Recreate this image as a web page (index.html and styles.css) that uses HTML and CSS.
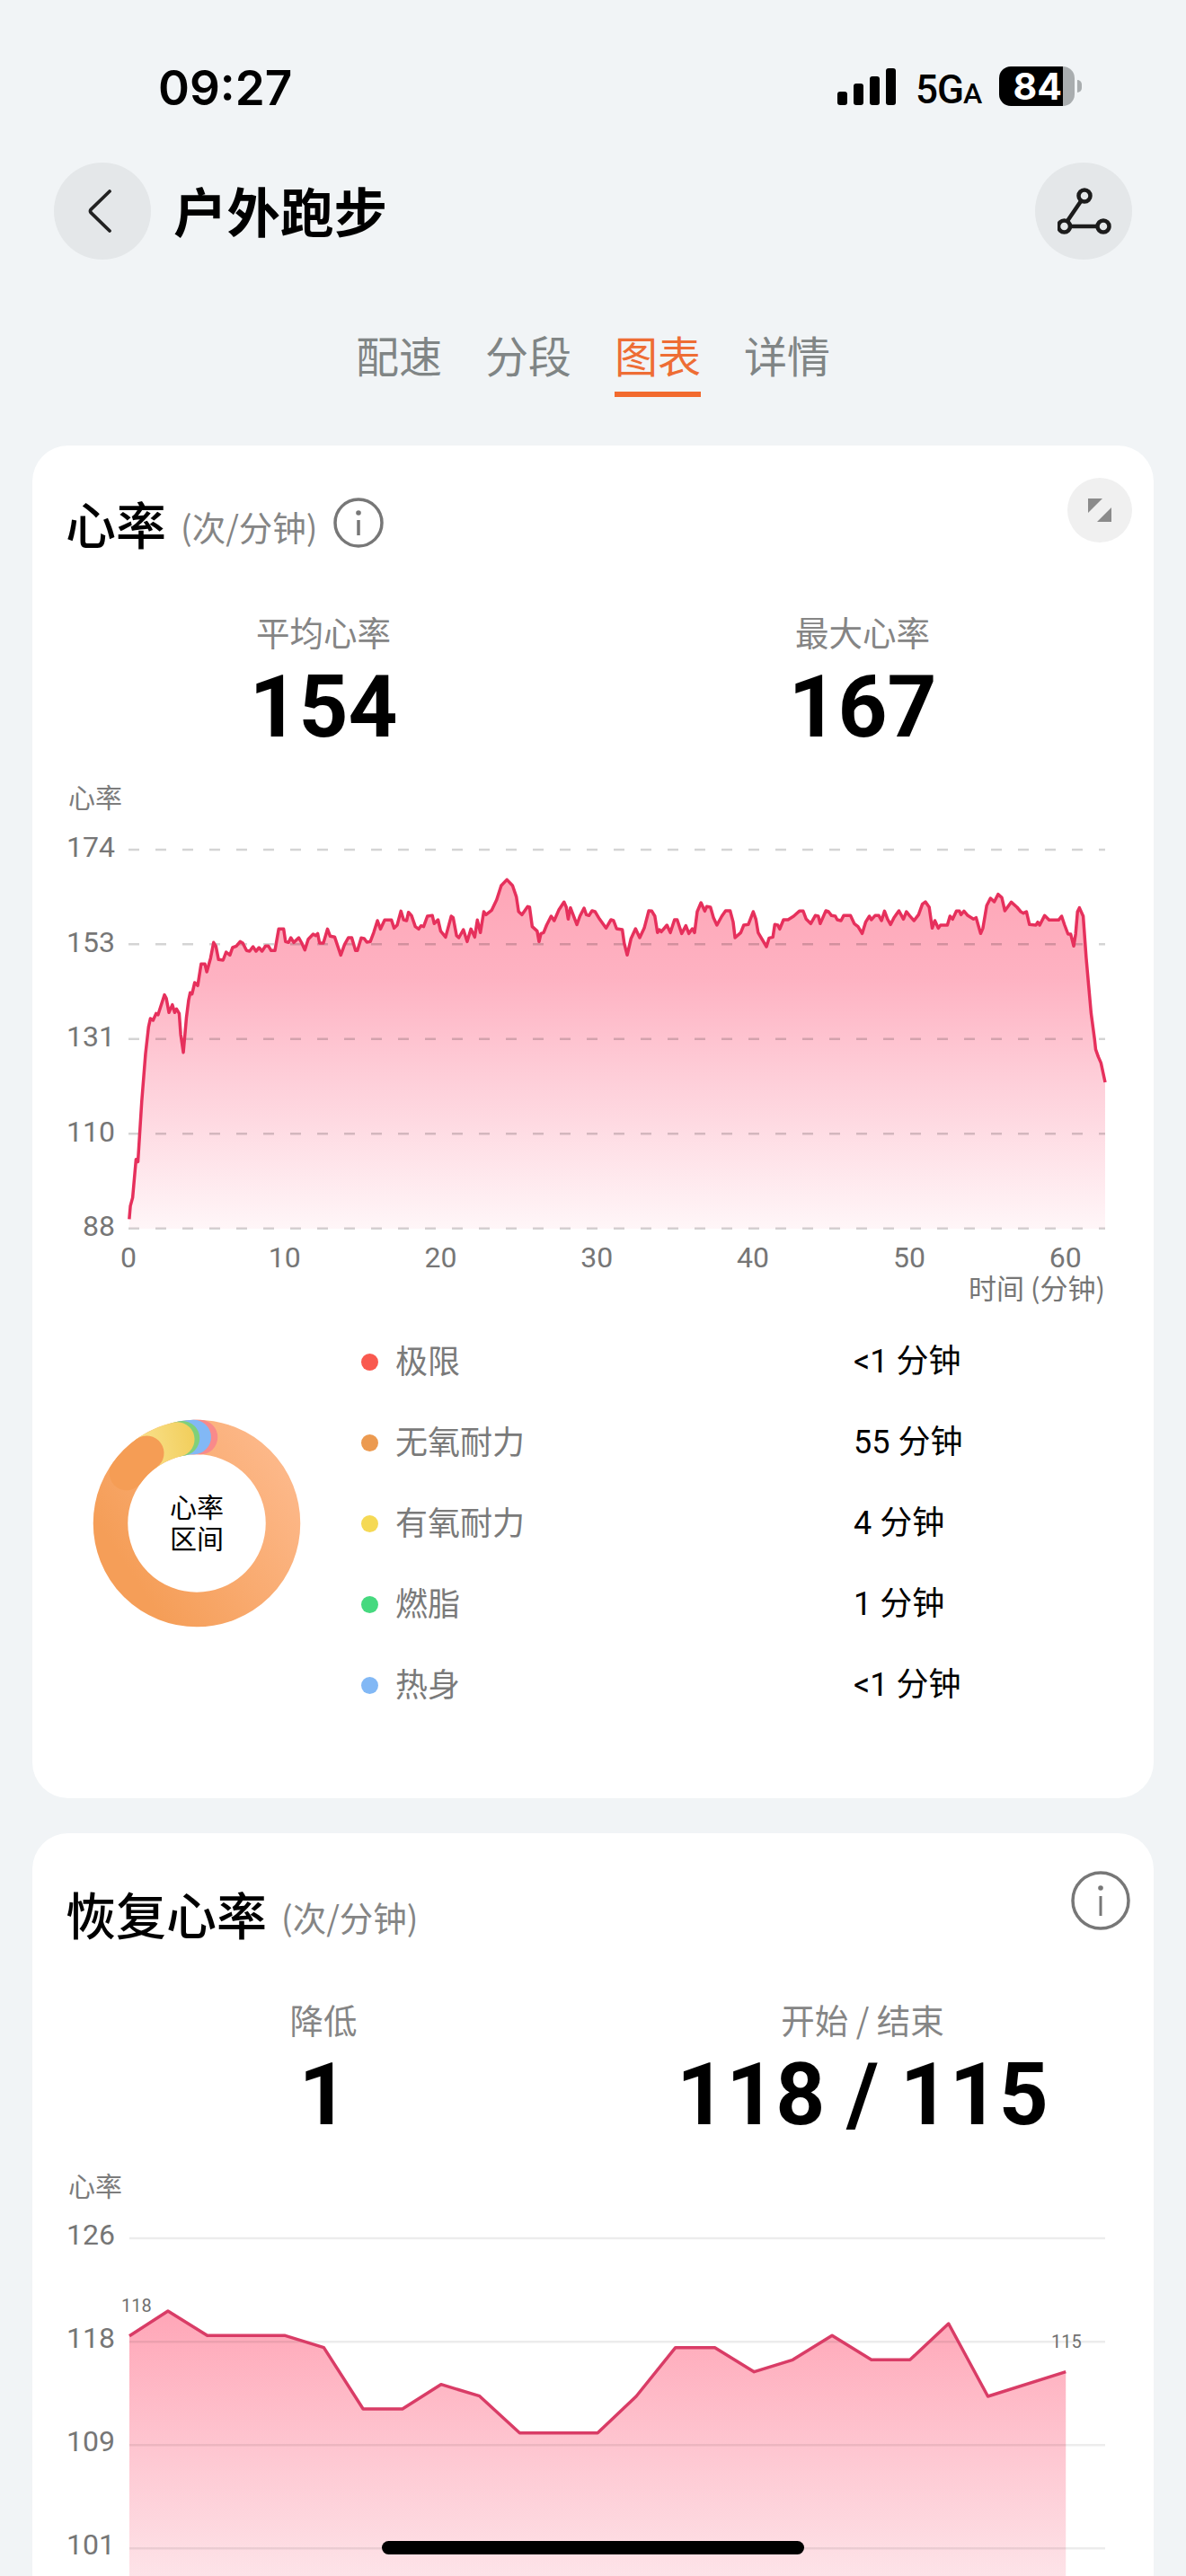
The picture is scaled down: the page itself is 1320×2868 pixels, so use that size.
FILE: index.html
```html
<!DOCTYPE html>
<html lang="zh">
<head>
<meta charset="utf-8">
<title>户外跑步</title>
<link rel="stylesheet" href="styles.css">
</head>
<body>
<div class="page">
  <div class="status">
    <div class="time">09:27</div>
    <div class="status-right">
      <div class="signal"><i class="b1"></i><i class="b2"></i><i class="b3"></i><i class="b4"></i></div>
      <div class="net">5G<span class="net-a">A</span></div>
      <div class="battery"><div class="batt-fill">84</div><div class="batt-rest"></div><div class="batt-nub"></div></div>
    </div>
  </div>

  <header class="header">
    <div class="round-btn">
      <svg class="ico-back" viewBox="0 0 28 48"><path d="M25 2 L4 22.500 Q3 24 4 25.500 L25 46" fill="none" stroke="#222" stroke-width="3.800" stroke-linecap="round"/></svg>
    </div>
    <h1 class="title">户外跑步</h1>
    <div class="round-btn">
      <svg class="ico-route" viewBox="0 0 60 52"><g fill="none" stroke="#1c1c1c" stroke-width="4.500"><circle cx="30" cy="9" r="6.500"/><circle cx="7.500" cy="43" r="6.500"/><circle cx="51" cy="43" r="6.500"/><path d="M26 15 L11 37 M14 43 H44"/></g></svg>
    </div>
  </header>

  <nav class="tabs">
    <div class="tab">配速</div>
    <div class="tab">分段</div>
    <div class="tab active">图表</div>
    <div class="tab">详情</div>
  </nav>

  <section class="card card-one">
    <div class="card-head">
      <div class="head-left">
        <h2 class="card-title">心率</h2>
        <span class="unit">(次/分钟)</span>
        <svg class="ico-info" viewBox="0 0 56 56"><circle cx="28" cy="28" r="26" fill="none" stroke="#777" stroke-width="3.500"/><circle cx="28" cy="17" r="2.800" fill="#777"/><path d="M28 25 V42" stroke="#777" stroke-width="3.500"/></svg>
      </div>
      <div class="expand-btn">
        <svg class="ico-expand" viewBox="0 0 28 28"><path d="M1 1 H17 L1 17 Z M27 11 V27 H11 Z" fill="#8b8b8b"/></svg>
      </div>
    </div>

    <div class="stats stats-one">
      <div class="stat"><div class="stat-label">平均心率</div><div class="stat-value">154</div></div>
      <div class="stat"><div class="stat-label">最大心率</div><div class="stat-value">167</div></div>
    </div>

    <div class="chart-name">心率</div>
    <div class="plot plot-one">
      <div class="y-axis y-axis-one"><span>174</span><span>153</span><span>131</span><span>110</span><span>88</span></div>
      <svg class="chart chart-one" viewBox="245 198 2581 1266" preserveAspectRatio="none">
        <defs>
          <linearGradient id="hrFill" gradientUnits="userSpaceOnUse" x1="0" y1="300" x2="0" y2="1464">
            <stop offset="0" stop-color="#fea6b7"/>
            <stop offset=".28" stop-color="#feb2c2"/>
            <stop offset=".6" stop-color="#fed1db"/>
            <stop offset="1" stop-color="#fff6f8"/>
          </linearGradient>
        </defs>
        <polygon fill="url(#hrFill)" points="247,1464 247,1432 250,1388 256,1360 265,1232 270,1240 280,1040 290,880 298,790 303,762 310,768 318,745 323,750 340,683 345,695 352,742 361,716 367,742 372,730 379,745 383,815 390,875 398,760 404,700 408,676 413,680 420,642 428,652 437,580 447,580 452,606 462,560 470,508 476,520 483,565 495,567 503,540 513,550 520,525 530,520 540,505 547,510 557,535 565,537 574,522 582,537 590,525 598,537 607,520 615,520 622,535 632,535 642,463 655,463 660,505 668,508 674,492 682,508 695,492 703,510 711,533 720,497 733,480 740,485 745,478 750,510 760,510 771,463 778,487 790,490 798,520 806,550 816,515 826,492 835,492 845,535 850,535 860,493 868,495 875,507 884,505 893,475 903,435 911,463 922,433 940,433 947,460 955,450 965,403 972,432 980,435 985,407 993,418 1003,455 1012,463 1018,452 1025,455 1035,420 1048,418 1053,445 1063,432 1070,470 1083,490 1098,420 1103,425 1112,485 1118,492 1130,465 1140,505 1150,463 1160,490 1167,433 1175,475 1184,405 1190,415 1205,400 1218,365 1230,318 1245,298 1260,318 1270,355 1276,405 1285,415 1300,388 1305,390 1312,455 1325,470 1330,505 1335,478 1342,475 1350,450 1362,420 1370,435 1382,400 1396,373 1402,390 1407,430 1413,392 1420,415 1430,448 1438,420 1449,393 1455,415 1462,418 1470,402 1478,405 1490,430 1507,460 1520,432 1527,435 1535,462 1550,465 1555,510 1563,550 1573,495 1585,462 1596,492 1608,460 1620,402 1628,403 1636,420 1643,475 1648,465 1653,472 1668,450 1677,475 1688,432 1695,432 1707,478 1718,452 1726,478 1735,462 1741,475 1748,405 1758,375 1768,403 1773,388 1783,390 1791,425 1800,450 1813,420 1823,402 1835,402 1843,440 1848,492 1863,475 1871,450 1883,448 1896,405 1903,430 1909,475 1931,522 1938,493 1948,490 1953,448 1961,450 1966,463 1976,432 1988,432 2003,420 2018,403 2028,403 2036,430 2048,445 2060,418 2068,420 2073,445 2088,402 2095,405 2103,418 2113,420 2118,432 2128,435 2135,418 2153,418 2163,445 2173,455 2184,478 2193,440 2203,420 2208,432 2218,418 2228,418 2235,435 2243,403 2251,430 2259,448 2268,425 2281,402 2293,430 2301,405 2309,418 2321,435 2333,415 2343,380 2351,372 2361,390 2369,460 2376,435 2385,460 2391,450 2409,450 2416,420 2423,430 2433,403 2441,403 2445,415 2453,403 2463,418 2478,430 2485,425 2497,478 2503,460 2513,385 2523,360 2533,372 2543,347 2553,358 2561,402 2578,373 2593,390 2603,405 2610,410 2618,405 2626,448 2643,450 2648,440 2653,450 2666,418 2678,433 2703,433 2711,420 2719,450 2728,480 2735,480 2743,520 2748,480 2753,405 2758,392 2768,420 2776,560 2783,660 2789,745 2798,830 2801,865 2808,890 2815,910 2826,975 2826,1464"/>
        <g class="grid-dash">
          <line x1="245" x2="2826" y1="198" y2="198" vector-effect="non-scaling-stroke"/>
          <line x1="245" x2="2826" y1="514" y2="514" vector-effect="non-scaling-stroke"/>
          <line x1="245" x2="2826" y1="830" y2="830" vector-effect="non-scaling-stroke"/>
          <line x1="245" x2="2826" y1="1147" y2="1147" vector-effect="non-scaling-stroke"/>
          <line x1="245" x2="2826" y1="1463" y2="1463" vector-effect="non-scaling-stroke"/>
        </g>
        <polyline class="hr-line" vector-effect="non-scaling-stroke" points="247,1432 250,1388 256,1360 265,1232 270,1240 280,1040 290,880 298,790 303,762 310,768 318,745 323,750 340,683 345,695 352,742 361,716 367,742 372,730 379,745 383,815 390,875 398,760 404,700 408,676 413,680 420,642 428,652 437,580 447,580 452,606 462,560 470,508 476,520 483,565 495,567 503,540 513,550 520,525 530,520 540,505 547,510 557,535 565,537 574,522 582,537 590,525 598,537 607,520 615,520 622,535 632,535 642,463 655,463 660,505 668,508 674,492 682,508 695,492 703,510 711,533 720,497 733,480 740,485 745,478 750,510 760,510 771,463 778,487 790,490 798,520 806,550 816,515 826,492 835,492 845,535 850,535 860,493 868,495 875,507 884,505 893,475 903,435 911,463 922,433 940,433 947,460 955,450 965,403 972,432 980,435 985,407 993,418 1003,455 1012,463 1018,452 1025,455 1035,420 1048,418 1053,445 1063,432 1070,470 1083,490 1098,420 1103,425 1112,485 1118,492 1130,465 1140,505 1150,463 1160,490 1167,433 1175,475 1184,405 1190,415 1205,400 1218,365 1230,318 1245,298 1260,318 1270,355 1276,405 1285,415 1300,388 1305,390 1312,455 1325,470 1330,505 1335,478 1342,475 1350,450 1362,420 1370,435 1382,400 1396,373 1402,390 1407,430 1413,392 1420,415 1430,448 1438,420 1449,393 1455,415 1462,418 1470,402 1478,405 1490,430 1507,460 1520,432 1527,435 1535,462 1550,465 1555,510 1563,550 1573,495 1585,462 1596,492 1608,460 1620,402 1628,403 1636,420 1643,475 1648,465 1653,472 1668,450 1677,475 1688,432 1695,432 1707,478 1718,452 1726,478 1735,462 1741,475 1748,405 1758,375 1768,403 1773,388 1783,390 1791,425 1800,450 1813,420 1823,402 1835,402 1843,440 1848,492 1863,475 1871,450 1883,448 1896,405 1903,430 1909,475 1931,522 1938,493 1948,490 1953,448 1961,450 1966,463 1976,432 1988,432 2003,420 2018,403 2028,403 2036,430 2048,445 2060,418 2068,420 2073,445 2088,402 2095,405 2103,418 2113,420 2118,432 2128,435 2135,418 2153,418 2163,445 2173,455 2184,478 2193,440 2203,420 2208,432 2218,418 2228,418 2235,435 2243,403 2251,430 2259,448 2268,425 2281,402 2293,430 2301,405 2309,418 2321,435 2333,415 2343,380 2351,372 2361,390 2369,460 2376,435 2385,460 2391,450 2409,450 2416,420 2423,430 2433,403 2441,403 2445,415 2453,403 2463,418 2478,430 2485,425 2497,478 2503,460 2513,385 2523,360 2533,372 2543,347 2553,358 2561,402 2578,373 2593,390 2603,405 2610,410 2618,405 2626,448 2643,450 2648,440 2653,450 2666,418 2678,433 2703,433 2711,420 2719,450 2728,480 2735,480 2743,520 2748,480 2753,405 2758,392 2768,420 2776,560 2783,660 2789,745 2798,830 2801,865 2808,890 2815,910 2826,975"/>
      </svg>
    </div>
    <div class="x-axis"><span>0</span><span>10</span><span>20</span><span>30</span><span>40</span><span>50</span><span>60</span></div>
    <div class="x-name">时间 (分钟)</div>

    <div class="zones">
      <div class="donut">
        <svg class="donut-svg" viewBox="-120 -120 240 240">
          <defs>
            <linearGradient id="ringFill" gradientUnits="userSpaceOnUse" x1="90" y1="-90" x2="-90" y2="30">
              <stop offset="0" stop-color="#fdb98b"/>
              <stop offset="1" stop-color="#f59e58"/>
            </linearGradient>
            <linearGradient id="yellowFill" gradientUnits="userSpaceOnUse" x1="-60" y1="-80" x2="-5" y2="-90">
              <stop offset="0" stop-color="#f9e08a"/>
              <stop offset="1" stop-color="#f2cf5e"/>
            </linearGradient>
          </defs>
          <g fill="none" stroke-width="38.500" stroke-linecap="round">
            <circle r="96" stroke="url(#ringFill)"/>
            <path d="M-3.300 -96 L4 -95.900" stroke="#f98a8a"/>
            <path d="M-16 -94.700 A96 96 0 0 1 -3.300 -96" stroke="#82b8f5"/>
            <path d="M-21.700 -93.500 L-16 -94.700" stroke="#7fd07a"/>
            <path d="M-55.700 -78.200 A96 96 0 0 1 -21.700 -93.500" stroke="url(#yellowFill)"/>
            <path d="M-78 -56 A96 96 0 0 1 -55.700 -78.200" stroke="#f59d55"/>
          </g>
        </svg>
        <div class="donut-text">心率<br>区间</div>
      </div>
      <ul class="legend">
        <li class="legend-row"><i class="dot dot-red"></i><span class="legend-name">极限</span><span class="legend-val">&lt;1 分钟</span></li>
        <li class="legend-row"><i class="dot dot-orange"></i><span class="legend-name">无氧耐力</span><span class="legend-val">55 分钟</span></li>
        <li class="legend-row"><i class="dot dot-yellow"></i><span class="legend-name">有氧耐力</span><span class="legend-val">4 分钟</span></li>
        <li class="legend-row"><i class="dot dot-green"></i><span class="legend-name">燃脂</span><span class="legend-val">1 分钟</span></li>
        <li class="legend-row"><i class="dot dot-blue"></i><span class="legend-name">热身</span><span class="legend-val">&lt;1 分钟</span></li>
      </ul>
    </div>
  </section>

  <section class="card card-two">
    <div class="card-head head-two">
      <div class="head-left">
        <h2 class="card-title">恢复心率</h2>
        <span class="unit">(次/分钟)</span>
      </div>
      <svg class="ico-info-lg" viewBox="0 0 66 66"><circle cx="33" cy="33" r="31" fill="none" stroke="#777" stroke-width="3.500"/><circle cx="33" cy="19" r="2.800" fill="#777"/><path d="M33 28 V50" stroke="#777" stroke-width="3"/></svg>
    </div>

    <div class="stats stats-two">
      <div class="stat"><div class="stat-label">降低</div><div class="stat-value">1</div></div>
      <div class="stat"><div class="stat-label">开始 / 结束</div><div class="stat-value">118 / 115</div></div>
    </div>

    <div class="chart-name chart-name-two">心率</div>
    <div class="plot plot-two">
      <div class="y-axis y-axis-two"><span>126</span><span>118</span><span>109</span><span>101</span></div>
      <svg class="chart chart-two" viewBox="171 272 1290 1200" preserveAspectRatio="none">
        <defs>
          <linearGradient id="recFill" gradientUnits="userSpaceOnUse" x1="0" y1="515" x2="0" y2="1472">
            <stop offset="0" stop-color="#ffa6b7"/>
            <stop offset="1" stop-color="#fde8ec"/>
          </linearGradient>
        </defs>
        <polygon fill="url(#recFill)" points="171,1472 171,598 222,515 274,597 377,597 428,637 480,842 532,842 583,760 634,799 687,922 790,922 841,800 893,637 945,637 997,718 1048,678 1100,597 1152,678 1203,678 1254,557 1306,800 1409,718 1409,1472"/>
        <g class="grid-solid">
          <line x1="171" x2="1461" y1="272" y2="272" vector-effect="non-scaling-stroke"/>
          <line x1="171" x2="1461" y1="618" y2="618" vector-effect="non-scaling-stroke"/>
          <line x1="171" x2="1461" y1="963" y2="963" vector-effect="non-scaling-stroke"/>
          <line x1="171" x2="1461" y1="1308" y2="1308" vector-effect="non-scaling-stroke"/>
        </g>
        <polyline class="rec-line" vector-effect="non-scaling-stroke" points="171,598 222,515 274,597 377,597 428,637 480,842 532,842 583,760 634,799 687,922 790,922 841,800 893,637 945,637 997,718 1048,678 1100,597 1152,678 1203,678 1254,557 1306,800 1409,718"/>
      </svg>
      <span class="point-tag tag-start">118</span>
      <span class="point-tag tag-end">115</span>
    </div>
  </section>

  <div class="home-bar"></div>
</div>
</body>
</html>
```

FILE: styles.css
```css
* { box-sizing: border-box; }
html, body { margin: 0; padding: 0; }
body {
  background: #f1f4f6;
  font-family: Roboto, "Noto Sans CJK SC", sans-serif;
  color: #000;
}
.page {
  position: relative;
  width: 1320px;
  height: 2868px;
  overflow: hidden;
}

/* status bar */
.status {
  height: 181px;
  padding: 70px 116px 0 176px;
  display: flex;
  justify-content: space-between;
  align-items: flex-start;
}
.time {
  font: 600 53px/56px Inter, sans-serif;
}
.status-right {
  display: flex;
  align-items: flex-start;
  padding-top: 4px;
}
.signal {
  display: flex;
  align-items: flex-end;
  gap: 7px;
  height: 41px;
  margin-top: 2px;
}
.signal i {
  display: block;
  width: 11px;
  background: #000;
  border-radius: 3px;
}
.b1 { height: 15px; }
.b2 { height: 24px; }
.b3 { height: 32px; }
.b4 { height: 41px; }
.net {
  margin-left: 22px;
  font: 500 44px/44px Roboto, sans-serif;
  letter-spacing: -1px;
  width: 72px;
  white-space: nowrap;
  margin-top: 4px;
}
.net-a { font-size: 32px; }
.battery {
  position: relative;
  display: flex;
  margin-left: 21px;
  height: 44px;
}
.batt-fill {
  width: 71px;
  height: 44px;
  background: #000;
  border-radius: 13px 0 0 13px;
  color: #fff;
  font: 700 41px/44px Inter, sans-serif;
  text-align: right;
  padding-right: 1px;
}
.batt-rest {
  width: 13px;
  height: 44px;
  background: #a9adaf;
  border-radius: 0 13px 13px 0;
}
.batt-nub {
  width: 5px;
  height: 14px;
  margin: 15px 0 0 3px;
  background: #a9adaf;
  border-radius: 0 5px 5px 0;
}

/* header */
.header {
  display: flex;
  align-items: center;
  height: 108px;
  padding: 0 60px;
}
.round-btn {
  width: 108px;
  height: 108px;
  border-radius: 50%;
  background: #e4e7e9;
  display: flex;
  align-items: center;
  justify-content: center;
  flex: none;
}
.ico-back { width: 28px; height: 48px; margin-right: 7px; }
.ico-route { width: 60px; height: 52px; margin-left: 2px; }
.title {
  flex: 1;
  margin: -4px 0 0 25px;
  font: 700 59.500px/70px "Noto Sans CJK SC", sans-serif;
}

/* tabs */
.tabs {
  display: flex;
  justify-content: center;
  gap: 48px;
  margin-top: 72px;
}
.tab {
  width: 96px;
  height: 81px;
  font: 400 48px/66px "Noto Sans CJK SC", sans-serif;
  color: #808585;
  text-align: center;
  white-space: nowrap;
}
.tab.active {
  color: #ee6d34;
  border-bottom: 6px solid #f26a2e;
}

/* cards */
.card {
  margin: 54px 36px 0;
  padding: 0 24px;
  background: #fff;
  border-radius: 40px;
}
.card-one { padding-bottom: 81px; }
.card-two { margin-top: 39px; height: 900px; }
.card-head {
  display: flex;
  justify-content: space-between;
  align-items: flex-start;
  padding-top: 36px;
  height: 108px;
}
.head-two { padding-top: 39px; height: 107px; }
.head-left {
  display: flex;
  align-items: center;
  padding: 18px 0 0 13px;
}
.head-two .head-left { padding-top: 18px; }
.card-title {
  margin: 0;
  font: 500 56px/64px "Noto Sans CJK SC", sans-serif;
}
.unit {
  margin: 7px 0 0 16px;
  font: 400 37.500px/50px "Noto Sans CJK SC", sans-serif;
  color: #858585;
}
.ico-info { width: 56px; height: 56px; margin-left: 17px; }
.ico-info-lg { width: 66px; height: 66px; margin: 3px 2px 0 0; }
.expand-btn {
  width: 72px;
  height: 72px;
  border-radius: 50%;
  background: #f0f0f0;
  display: flex;
  align-items: center;
  justify-content: center;
}
.ico-expand { width: 28px; height: 28px; }

/* stats */
.stats { display: grid; grid-template-columns: 600px 600px; }
.stats-one { margin-top: 77px; }
.stats-two { margin-top: 78px; }
.stat { text-align: center; }
.stat-label {
  font: 400 37.500px/44px "Noto Sans CJK SC", sans-serif;
  color: #858585;
}
.stat-value {
  margin-top: 12px;
  font: 700 96px/100px Roboto, sans-serif;
  white-space: nowrap;
}

/* charts */
.chart-name {
  margin-top: 31px;
  padding-left: 16px;
  font: 400 30px/36px "Noto Sans CJK SC", sans-serif;
  color: #7c7c7c;
}
.chart-name-two { margin-top: 32px; }
.plot { display: flex; position: relative; }
.plot-one { margin-top: 42px; height: 422px; }
.plot-two { margin-top: 42px; height: 400px; }
.y-axis {
  display: flex;
  flex-direction: column;
  justify-content: space-between;
  flex: none;
  align-items: flex-end;
  width: 68px;
  font: 400 32px/40px Roboto, sans-serif;
  color: #767676;
}
.y-axis-one { height: 462px; margin-top: -23px; }
.y-axis-two { height: 385px; margin-top: -24px; }
.chart { display: block; flex: none; overflow: visible; }
.chart-one { width: 1087px; height: 422px; margin-left: 15px; }
.chart-two { width: 1086px; height: 400px; margin-left: 16px; }
.grid-dash line {
  stroke: rgba(0, 0, 0, .17);
  stroke-width: 2.500px;
  stroke-dasharray: 12 18;
}
.grid-solid line {
  stroke: rgba(0, 0, 0, .075);
  stroke-width: 2.500px;
}
.hr-line {
  fill: none;
  stroke: #e6305c;
  stroke-width: 3.500px;
  stroke-linejoin: round;
}
.rec-line {
  fill: none;
  stroke: #d93c66;
  stroke-width: 3.500px;
  stroke-linejoin: round;
}
.point-tag {
  position: absolute;
  font: 400 20px/24px Roboto, sans-serif;
  color: #6f6f6f;
}
.tag-start { left: 75px; top: 63px; }
.tag-end { left: 1110px; top: 103px; }
.x-axis {
  display: flex;
  margin: 17px 0 0 -4px;
  font: 400 32px/30px Roboto, sans-serif;
  color: #767676;
}
.x-axis span { width: 173.800px; text-align: center; flex: none; }
.x-name {
  padding-right: 30px;
  text-align: right;
  font: 400 31px/36px "Noto Sans CJK SC", sans-serif;
  color: #767676;
}

/* heart-rate zones */
.zones {
  display: flex;
  align-items: center;
  margin-top: 20px;
}
.donut {
  position: relative;
  flex: none;
  width: 240px;
  height: 240px;
  margin-left: 39px;
}
.donut-svg { display: block; width: 240px; height: 240px; }
.donut-text {
  position: absolute;
  inset: 0;
  display: flex;
  align-items: center;
  justify-content: center;
  text-align: center;
  padding-bottom: 4px;
  font: 400 30px/35px "Noto Sans CJK SC", sans-serif;
}
.legend {
  list-style: none;
  margin: 0 0 0 63px;
  padding: 0;
}
.legend-row {
  display: grid;
  grid-template-columns: 19px 491px auto;
  column-gap: 19px;
  align-items: center;
  height: 90px;
}
.dot { width: 19px; height: 19px; border-radius: 50%; display: block; }
.dot-red { background: #f9594f; }
.dot-orange { background: #ec9a50; }
.dot-yellow { background: #f5d955; }
.dot-green { background: #46d97f; }
.dot-blue { background: #82b8f5; }
.legend-name {
  margin-top: -6px;
  font: 400 36px/50px "Noto Sans CJK SC", sans-serif;
  color: #7a7a7a;
}
.legend-val {
  font: 400 36px/50px Roboto, "Noto Sans CJK SC", sans-serif;
  color: #000;
  white-space: nowrap;
}

/* home indicator */
.home-bar {
  position: absolute;
  left: 425px;
  top: 2829px;
  width: 470px;
  height: 15px;
  background: #000;
  border-radius: 8px;
}
```
